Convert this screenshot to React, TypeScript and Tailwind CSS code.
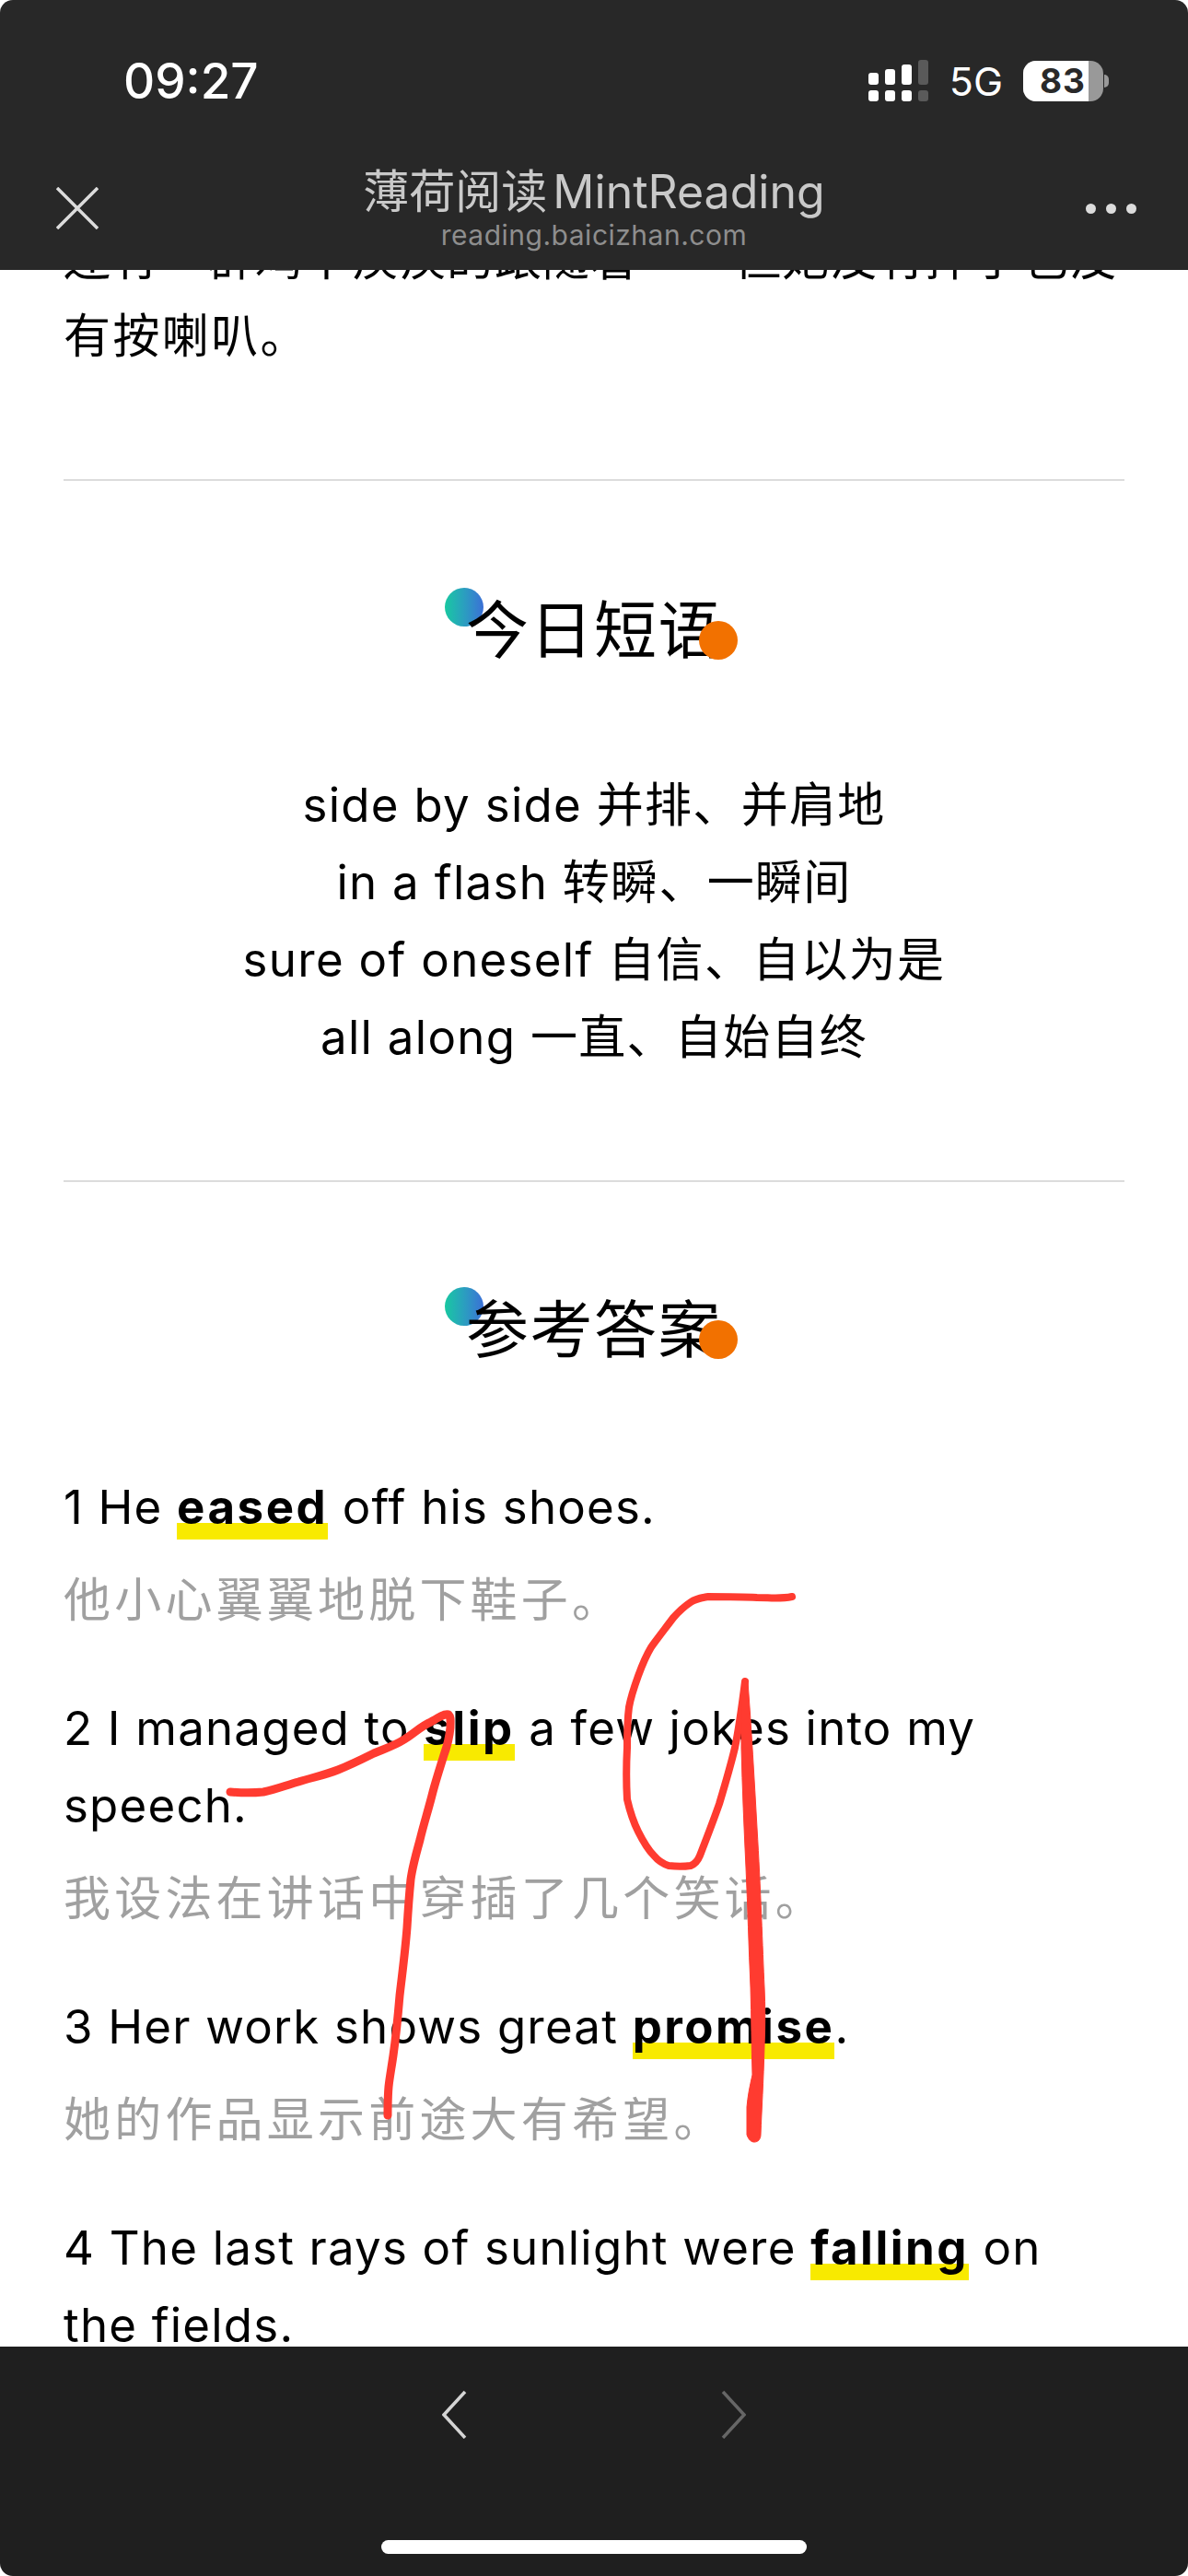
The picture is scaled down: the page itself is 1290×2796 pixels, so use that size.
const sans = "font-['Inter','Noto_Sans_CJK_SC',sans-serif]";

function Heading({ children }: { children: string }) {
  return (
    <div className="flex justify-center">
      <h2 className="relative text-[68px] leading-[84px] tracking-[1.5px] text-black">
        <span className="absolute left-[-23px] top-[-4px] h-[42px] w-[42px] rounded-full bg-gradient-to-r from-[#18c8a0] to-[#3b6fd6]" />
        <span className="relative">{children}</span>
        <span className="absolute right-[-17px] top-[32px] h-[42px] w-[42px] rounded-full bg-[#f27100]" />
      </h2>
    </div>
  );
}

function Mark({ children }: { children: string }) {
  return (
    <b className="inline-block bg-[linear-gradient(transparent_59px,#f8ea00_59px,#f8ea00_77px,transparent_77px)] font-bold tracking-[2.5px]">
      {children}
    </b>
  );
}

function Answer({ en, zh }: { en: React.ReactNode; zh: string }) {
  return (
    <div className="mb-[55px]">
      <p className="tracking-[1.2px] text-black">{en}</p>
      <p className="mt-[17px] tracking-[4.2px] text-[#a0a0a0]">{zh}</p>
    </div>
  );
}

function StatusBar() {
  return (
    <div className="flex h-[172px] items-center justify-between pl-[134px] pr-[86px] pt-[3px]">
      <span className="text-[53px] font-medium leading-[60px] text-white">09:27</span>
      <div className="flex items-center">
        <svg width="66" height="45" viewBox="0 0 66 45" className="mr-[22px]">
          <g fill="#fff">
            <rect x="0" y="14" width="11" height="13" rx="3" />
            <rect x="18" y="10" width="11" height="17" rx="3" />
            <rect x="36" y="5" width="11" height="22" rx="3" />
            <rect x="0" y="33" width="11" height="12" rx="3" />
            <rect x="18" y="33" width="11" height="12" rx="3" />
            <rect x="36" y="33" width="11" height="12" rx="3" />
          </g>
          <g fill="#5a5a5a">
            <rect x="54" y="0" width="11" height="27" rx="3" />
            <rect x="54" y="33" width="11" height="12" rx="3" />
          </g>
        </svg>
        <span className="mr-[22px] text-[43px] leading-[50px] text-white">5G</span>
        <div className="flex h-[44px] w-[87px] overflow-hidden rounded-[14px] bg-[#999]">
          <div className="flex h-full w-[71px] items-center justify-end bg-white pr-[3px]">
            <span className="text-[37px] font-bold leading-none tracking-[1px] text-[#292929]">83</span>
          </div>
        </div>
        <div className="ml-[1px] h-[14px] w-[5px] rounded-r-full bg-[#999]" />
      </div>
    </div>
  );
}

function TitleBar() {
  return (
    <div className="relative flex h-[121px] flex-col items-center pt-[5px]">
      <svg width="46" height="46" viewBox="0 0 46 46" className="absolute left-[61px] top-[31px]" fill="none" stroke="#dcdcdc" strokeWidth="3.5">
        <path d="M1 1 45 45M45 1 1 45" />
      </svg>
      <div className="flex gap-[6px] text-[50px] leading-[62px] text-[#c9c9c9]">
        <span>薄荷阅读</span>
        <span>MintReading</span>
      </div>
      <span className="text-[30px] leading-[32px] tracking-[0.5px] text-[#8e8e8e]">reading.baicizhan.com</span>
      <div className="absolute right-[56px] top-[49px] flex gap-[11px]">
        <span className="h-[11px] w-[11px] rounded-full bg-[#dcdcdc]" />
        <span className="h-[11px] w-[11px] rounded-full bg-[#dcdcdc]" />
        <span className="h-[11px] w-[11px] rounded-full bg-[#dcdcdc]" />
      </div>
    </div>
  );
}

// hand-drawn red marks on top of the page
function Scribble() {
  return (
    <svg className="pointer-events-none absolute left-0 top-0" width="1290" height="2796" viewBox="0 0 1290 2796" fill="none" stroke="#ff3b30" strokeLinecap="round" strokeLinejoin="round">
      <path strokeWidth="9" d="M250 1945C262 1946 276 1946 286 1945C300 1942 310 1938 324 1934C340 1929 352 1927 367 1921C382 1915 392 1910 406 1903C418 1898 428 1895 439 1888C450 1881 458 1873 468 1869C476 1864 482 1860 487 1861C490 1864 489 1868 489 1875C488 1886 486 1894 482 1905C478 1918 474 1930 470 1945C465 1965 460 1980 456 1997C452 2012 448 2025 446 2040C444 2060 443 2075 442 2092C440 2118 437 2140 434 2166C432 2190 430 2210 427 2231C425 2245 423 2255 422 2265C421 2276 421 2286 421 2296" />
      <path strokeWidth="8" d="M860 1733C846 1736 836 1734 822 1734C805 1733 785 1733 769 1733C762 1734 756 1735 750 1739C744 1743 738 1748 731 1756C722 1768 714 1778 707 1788C701 1798 697 1808 693 1819C689 1830 685 1842 683 1853C681 1868 681 1882 681 1897C680 1916 680 1936 681 1953C684 1966 688 1978 693 1988C698 1998 703 2007 710 2014C715 2020 720 2023 726 2025C734 2026 743 2026 750 2025C755 2023 758 2019 760 2014C767 1996 774 1978 781 1958C787 1938 793 1918 798 1897C803 1873 806 1849 809 1825" />
      <path fill="#ff3b30" strokeWidth="1" d="M807 1825C805 1850 805 1872 805 1897C806 1940 808 1985 810 2027C812 2070 813 2113 815 2157C816 2190 816 2222 817 2252C814 2265 812 2275 811 2287C811 2297 811 2307 811 2317C813 2323 816 2325 819 2325C823 2325 826 2322 826 2317C827 2290 829 2260 830 2220C831 2198 831 2178 830 2157C828 2115 826 2050 822 1984C819 1930 816 1878 812 1825C811 1821 808 1821 807 1825Z" />
    </svg>
  );
}

export default function App() {
  return (
    <div className={`relative flex h-[2796px] w-[1290px] flex-col overflow-hidden bg-white ${sans}`}>
      <header className="z-10 h-[293px] shrink-0 rounded-t-[14px] bg-[#282828]">
        <StatusBar />
        <TitleBar />
      </header>
      <main className="min-h-0 flex-1 overflow-hidden px-[69px] text-[51px] leading-[84px] tracking-[1.3px]">
        <div className="-mt-[54px]">
          <p className="whitespace-nowrap tracking-[1px] text-black">还有一群鸡不疾疾的跟随着——但她没有摔了也没</p>
          <p className="tracking-[2.4px] text-black">有按喇叭。</p>
          <hr className="mt-[113px] border-t-2 border-[#dcdcdc]" />
          <div className="mt-[120px]">
            <Heading>今日短语</Heading>
          </div>
          <div className="mt-[106px] text-center text-black">
            <p>side by side 并排、并肩地</p>
            <p>in a flash 转瞬、一瞬间</p>
            <p>sure of oneself 自信、自以为是</p>
            <p>all along 一直、自始自终</p>
          </div>
          <hr className="mt-[113px] border-t-2 border-[#dcdcdc]" />
          <div className="mt-[118px]">
            <Heading>参考答案</Heading>
          </div>
          <div className="mt-[109px]">
            <Answer en={<>1 He <Mark>eased</Mark> off his shoes.</>} zh="他小心翼翼地脱下鞋子。" />
            <Answer en={<>2 I managed to <Mark>slip</Mark> a few jokes into my speech.</>} zh="我设法在讲话中穿插了几个笑话。" />
            <Answer en={<>3 Her work shows great <Mark>promise</Mark>.</>} zh="她的作品显示前途大有希望。" />
            <Answer en={<>4 The last rays of sunlight were <Mark>falling</Mark> on the fields.</>} zh="" />
          </div>
        </div>
      </main>
      <footer className="relative z-10 h-[249px] shrink-0 rounded-b-[14px] bg-[#1f1f1f]">
        <div className="flex justify-center gap-[276px] pt-[48px]">
          <svg width="27" height="52" viewBox="0 0 27 52" fill="none" stroke="#d4d4d4" strokeWidth="3.5"><path d="M25 1 2 26 25 51" /></svg>
          <svg width="27" height="52" viewBox="0 0 27 52" fill="none" stroke="#666" strokeWidth="3.5"><path d="M2 1 25 26 2 51" /></svg>
        </div>
        <div className="absolute bottom-[24px] left-[414px] h-[15px] w-[462px] rounded-full bg-white" />
      </footer>
      <Scribble />
    </div>
  );
}
